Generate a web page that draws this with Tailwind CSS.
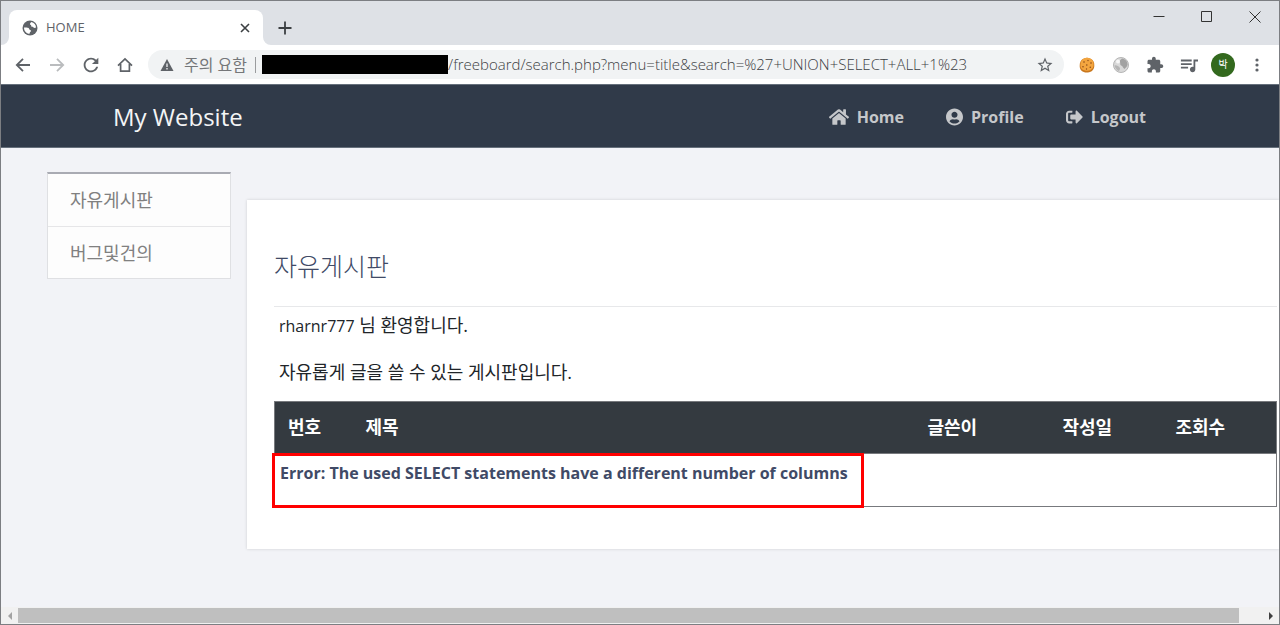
<!DOCTYPE html>
<html lang="ko">

<head>
  <meta charset="UTF-8">
  <meta name="viewport" content="width=device-width, initial-scale=1.0">
  <title>HOME</title>
  <script src="https://cdn.jsdelivr.net/npm/@tailwindcss/browser@4"></script>
</head>

<body class="font-['Open_Sans','Noto_Sans_CJK_KR',sans-serif]">
  <div class="flex flex-col h-screen border border-[#7c7e82] bg-white overflow-hidden">

    <!-- Tab strip -->
    <header class="flex items-end h-11 shrink-0 bg-[#dee1e6] pl-2">
      <div class="relative flex items-center w-[254px] h-[35px] rounded-t-lg bg-white pl-[13px] pr-2.5">
        <svg class="absolute -left-2 bottom-0 size-2" viewBox="0 0 8 8" fill="#fff"><path d="M8 0v8H0a8 8 0 0 0 8-8z"/></svg>
        <svg class="absolute -right-2 bottom-0 size-2" viewBox="0 0 8 8" fill="#fff"><path d="M0 0v8h8a8 8 0 0 1-8-8z"/></svg>
        <svg class="size-4 shrink-0" viewBox="0 0 16 16">
          <circle cx="8" cy="8" r="7.5" fill="#5f6368"/>
          <path d="M9.3 2.1c2.9.4 4.7 2.9 4.7 5.4-.9.7-1.900.6-2.5 0-.5-.6-1.5-.2-2.1-.9-.5-.6.1-1.3-.5-1.6-.7-.3-1.200-.8-.8-1.500.3-.6.700-.9 1.200-1.400z" fill="#fff"/>
          <path d="M2 7.6c1.700-.3 3.700-.2 4.500.5.900.7.500 1.500 1.500 1.800 1.200.3 1.300 1.100.5 1.800-.8.6-.7 1.500-1.300 2.200C4.200 13.700 2 11 2 7.600z" fill="#fff"/>
        </svg>
        <span class="ml-2 flex-1 text-[13px] text-[#5f6368]">HOME</span>
        <button class="flex items-center justify-center size-4" aria-label="Close tab">
          <svg class="size-4" viewBox="0 0 16 16" stroke="#3c4043" stroke-width="1.6"><path d="M4 4l8 8M12 4l-8 8"/></svg>
        </button>
      </div>
      <button class="flex items-center justify-center w-7 h-[35px] ml-2" aria-label="New tab">
        <svg class="size-4" viewBox="0 0 16 16" stroke="#3c4043" stroke-width="1.8"><path d="M8 1.500v13M1.500 8h13"/></svg>
      </button>
      <div class="flex ml-auto self-start">
        <button class="flex items-center justify-center w-12 h-8" aria-label="Minimize">
          <svg class="size-3" viewBox="0 0 12 12" stroke="#333"><path d="M.5 5.500h11"/></svg>
        </button>
        <button class="flex items-center justify-center w-12 h-8" aria-label="Maximize">
          <svg class="size-3" viewBox="0 0 12 12" fill="none" stroke="#333"><path d="M.5.5h10v10H.5z"/></svg>
        </button>
        <button class="flex items-center justify-center w-12 h-8" aria-label="Close">
          <svg class="size-3" viewBox="0 0 12 12" stroke="#333"><path d="M.5.5l11 11M11.500.5l-11 11"/></svg>
        </button>
      </div>
    </header>

    <!-- Toolbar -->
    <div class="flex items-center h-[39px] shrink-0 px-[5px] text-[#5f6368]">
      <button class="flex justify-center w-[34px]" aria-label="Back">
        <svg class="size-4" viewBox="0 0 16 16" fill="none" stroke="currentColor" stroke-width="1.8"><path d="M15 8H2M8 1.800L1.800 8 8 14.200"/></svg>
      </button>
      <button class="flex justify-center w-[34px] text-[#babcbe]" aria-label="Forward">
        <svg class="size-4" viewBox="0 0 16 16" fill="none" stroke="currentColor" stroke-width="1.800"><path d="M1 8h13M8 1.800L14.200 8 8 14.200"/></svg>
      </button>
      <button class="flex justify-center w-[34px]" aria-label="Reload">
        <svg class="size-[22px]" viewBox="0 0 24 24" fill="currentColor"><path d="M17.650 6.350C16.200 4.900 14.210 4 12 4c-4.420 0-7.990 3.580-7.990 8s3.570 8 7.990 8c3.730 0 6.840-2.550 7.730-6h-2.080c-.82 2.330-3.040 4-5.650 4-3.310 0-6-2.690-6-6s2.690-6 6-6c1.660 0 3.140.69 4.220 1.780L13 11h7V4l-2.350 2.350z"/></svg>
      </button>
      <button class="flex justify-center w-[34px]" aria-label="Home page">
        <svg class="size-4" viewBox="0 0 16 16" fill="none" stroke="currentColor" stroke-width="1.700"><path d="M1 8.600L8 2l7 6.600M3.600 7v7.200h8.800V7"/></svg>
      </button>

      <div class="flex flex-1 items-center h-[29px] mx-1.5 pl-3 pr-2.5 rounded-full bg-[#f1f3f4]">
        <svg class="size-3.5 shrink-0" viewBox="0 0 14 14"><path d="M7 1l6.500 12H.5z" fill="#5f6368"/><path d="M7 5.500v3.500M7 10v1.500" stroke="#f1f3f4" stroke-width="1.300"/></svg>
        <label for="url" class="ml-2.5 text-base whitespace-nowrap text-[#757779]">주의 요함</label>
        <span class="w-px h-4 ml-2 mr-1.5 bg-[#9a9c9e]"></span>
        <span class="w-[186px] h-[19px] bg-black"></span>
        <input id="url" type="text" value="/freeboard/search.php?menu=title&amp;search=%27+UNION+SELECT+ALL+1%23" class="flex-1 min-w-0 bg-transparent text-[15px] font-light text-[#3c4043] outline-none">
        <button aria-label="Bookmark">
          <svg class="size-[18px]" viewBox="0 0 24 24" fill="currentColor"><path d="M22 9.240l-7.190-.62L12 2 9.190 8.630 2 9.240l5.460 4.730L5.820 21 12 17.270 18.180 21l-1.630-7.030L22 9.240zM12 15.400l-3.760 2.270 1-4.280-3.320-2.880 4.380-.38L12 6.100l1.710 4.040 4.380.38-3.320 2.880 1 4.280L12 15.400z"/></svg>
        </button>
      </div>

      <button class="flex justify-center w-[34px]" aria-label="Cookie editor">
        <svg class="size-4" viewBox="0 0 16 16">
          <path d="M5 1.500c2-1.300 4.500-1 6.500.3 2.500 1 4 3.500 3.800 6.500.2 4-2.500 7-6.500 7.200C4 16 .500 13 .700 9 .500 5.500 2 2.500 5 1.500z" fill="#c9771d"/>
          <path d="M5.300 1.300c2-1 4.300-.8 6 .3 2.200 1 3.500 3.300 3.300 5.900.1 3.500-2.300 6-5.800 6.200-4.300.3-7.500-2-7.400-5.500.1-3.400 1.400-6 3.900-6.900z" fill="#f3a53f"/>
          <g fill="#8a4a18"><circle cx="5" cy="5" r=".8"/><circle cx="9" cy="3.500" r=".7"/><circle cx="12" cy="6" r=".8"/><circle cx="7.800" cy="8" r=".8"/><circle cx="4" cy="9.800" r=".8"/><circle cx="11.300" cy="10.300" r=".8"/><circle cx="7.500" cy="12" r=".7"/></g>
        </svg>
      </button>
      <button class="flex justify-center w-[34px]" aria-label="Proxy">
        <svg class="size-4" viewBox="0 0 16 16">
          <circle cx="8" cy="8" r="7.500" fill="#d9d9d9" stroke="#b5b5b5"/>
          <path d="M9 1.500c3.500.5 5.500 3 5.600 6-.5 2.500-2 3-3 4.500C9.500 11 10 9 8 8.500 6.500 7.500 8 6 6.500 4.500 7 3 8 2.500 9 1.500z" fill="#a2a2a2"/>
          <path d="M1.500 8.500c2-.5 4 .5 5.500 2.500 0 1.500-.5 2.500-1.500 3-2-1-3.500-3-4-5.500z" fill="#b5b5b5"/>
          <circle cx="5" cy="4.500" r="2" fill="#f7f7f7"/>
        </svg>
      </button>
      <button class="flex justify-center w-[34px]" aria-label="Extensions">
        <svg class="size-[18px]" viewBox="0 0 24 24" fill="currentColor"><path d="M20.500 11H19V7c0-1.100-.9-2-2-2h-4V3.500C13 2.120 11.880 1 10.500 1S8 2.120 8 3.500V5H4c-1.100 0-1.990.9-1.990 2v3.800H3.500c1.490 0 2.700 1.210 2.700 2.700s-1.210 2.700-2.700 2.700H2V20c0 1.100.9 2 2 2h3.800v-1.500c0-1.490 1.210-2.700 2.700-2.700 1.490 0 2.700 1.210 2.700 2.700V22H17c1.100 0 2-.9 2-2v-4h1.500c1.380 0 2.500-1.120 2.500-2.500S21.880 11 20.500 11z"/></svg>
      </button>
      <button class="flex justify-center w-[34px]" aria-label="Media">
        <svg class="size-[18px]" viewBox="2 2 20 20" fill="currentColor"><path d="M15 6H3v2h12V6zm0 4H3v2h12v-2zM3 16h8v-2H3v2zM17 6v8.180c-.31-.11-.65-.18-1-.18-1.660 0-3 1.340-3 3s1.340 3 3 3 3-1.340 3-3V8h3V6h-5z"/></svg>
      </button>
      <button class="flex justify-center w-[34px]" aria-label="Account">
        <span class="flex items-center justify-center size-6 rounded-full bg-[#33691e] text-white text-[10px]">박</span>
      </button>
      <button class="flex justify-center w-[34px]" aria-label="Menu">
        <svg class="size-4" viewBox="0 0 16 16" fill="currentColor"><circle cx="8" cy="3" r="1.600"/><circle cx="8" cy="8" r="1.600"/><circle cx="8" cy="13" r="1.600"/></svg>
      </button>
    </div>

    <!-- Navbar -->
    <nav class="flex items-center justify-between h-16 shrink-0 border-y border-[#66707c] bg-[#303a49] pt-0.5 pl-28 pr-[133px]">
      <a href="#" class="text-2xl text-[#f4f5f6]">My Website</a>
      <div class="flex gap-[42px] text-base font-bold text-[#c5c7ca]">
        <a href="#" class="flex items-center gap-2">
          <svg class="w-5 h-[18px]" viewBox="0 0 576 512" fill="currentColor"><path d="M280.370 148.260L96 300.110V464a16 16 0 0 0 16 16l112.060-.29a16 16 0 0 0 15.920-16V368a16 16 0 0 1 16-16h64a16 16 0 0 1 16 16v95.640a16 16 0 0 0 16 16.050L464 480a16 16 0 0 0 16-16V300L295.670 148.260a12.190 12.190 0 0 0-15.300 0zM571.600 251.470L488 182.560V44.050a12 12 0 0 0-12-12h-56a12 12 0 0 0-12 12v72.610L318.470 43a48 48 0 0 0-61 0L4.340 251.470a12 12 0 0 0-1.600 16.900l25.500 31A12 12 0 0 0 45.150 301l235.220-193.740a12.190 12.190 0 0 1 15.300 0L530.900 301a12 12 0 0 0 16.900-1.600l25.500-31a12 12 0 0 0-1.700-16.930z"/></svg>
          Home
        </a>
        <a href="#" class="flex items-center gap-2">
          <svg class="w-[17px] h-[18px]" viewBox="0 0 496 512" fill="currentColor"><path d="M248 8C111 8 0 119 0 256s111 248 248 248 248-111 248-248S385 8 248 8zm0 96c48.600 0 88 39.400 88 88s-39.400 88-88 88-88-39.400-88-88 39.400-88 88-88zm0 344c-58.700 0-111.300-26.600-146.500-68.200 18.800-35.400 55.600-59.800 98.500-59.800 2.400 0 4.800.4 7.100 1.100 13 4.200 26.600 6.900 40.900 6.900 14.300 0 28-2.700 40.900-6.900 2.300-.7 4.700-1.100 7.100-1.100 42.900 0 79.700 24.400 98.500 59.800C359.300 421.400 306.700 448 248 448z"/></svg>
          Profile
        </a>
        <a href="#" class="flex items-center gap-2">
          <svg class="w-[17px] h-[18px]" viewBox="0 0 512 512" fill="currentColor"><path d="M497 273L329 441c-15 15-41 4.500-41-17v-96H152c-13.300 0-24-10.700-24-24v-96c0-13.300 10.700-24 24-24h136V88c0-21.400 25.900-32 41-17l168 168c9.300 9.400 9.300 24.600 0 34zM192 436v-40c0-6.600-5.400-12-12-12H96c-17.700 0-32-14.300-32-32V160c0-17.700 14.300-32 32-32h84c6.600 0 12-5.400 12-12V76c0-6.600-5.400-12-12-12H96c-53 0-96 43-96 96v192c0 53 43 96 96 96h84c6.600 0 12-5.400 12-12z"/></svg>
          Logout
        </a>
      </div>
    </nav>

    <!-- Page -->
    <div class="flex flex-1 items-start min-h-0 gap-4 bg-[#f2f3f7] pt-6 pl-[46px]">
      <aside class="w-[184px] shrink-0 border border-[#dfe0e3] border-t-2 border-t-[#a9abb3] bg-[#fdfdfd] text-lg text-[#808080]">
        <a href="#" class="flex items-center h-[53px] pl-[22px] border-b border-[#e6e6e8]">자유게시판</a>
        <a href="#" class="flex items-center h-[51px] pl-[22px]">버그및건의</a>
      </aside>

      <main class="flex-1 mt-7 pt-[46px] pb-[42px] pl-[27px] pr-0.5 bg-white shadow-[0_0_3px_rgba(0,0,0,0.15)]">
        <h1 class="h-[61px] border-b border-[#e7e8ea] text-[25px] leading-10 font-light text-[#404a66]">자유게시판</h1>
        <p class="pl-[5px] mt-1.5 text-lg leading-6 text-[#212529]"><span class="text-base">rharnr777</span> 님 환영합니다.</p>
        <p class="pl-[5px] mt-[22px] text-lg leading-6 text-[#212529]">자유롭게 글을 쓸 수 있는 게시판입니다.</p>
        <div class="relative mt-[17px]">
          <table class="w-full table-fixed border border-[#77797d]">
            <thead class="bg-[#343a40] text-left text-lg text-white">
              <tr class="h-[52px] border-b border-[#77797d]">
                <th class="w-[78px] pl-[13px] pb-0.5">번호</th>
                <th class="pl-[13px] pb-0.5">제목</th>
                <th class="w-[135px] pl-[13px] pb-0.5">글쓴이</th>
                <th class="w-[113px] pl-[13px] pb-0.5">작성일</th>
                <th class="w-[114px] pl-[13px] pb-0.5">조회수</th>
              </tr>
            </thead>
            <tbody>
              <tr class="h-[53px]">
                <td colspan="5" class="align-top pl-[5px] pt-[7px] text-base font-bold text-[#404a66]">Error: The used SELECT statements have a different number of columns</td>
              </tr>
            </tbody>
          </table>
          <!-- Highlight around the SQL error -->
          <div class="absolute -left-0.5 top-[52px] w-[59%] h-[55px] border-3 border-[#ff0000]"></div>
        </div>
      </main>
    </div>

    <!-- Horizontal scrollbar -->
    <div class="flex items-center h-[17px] shrink-0 bg-[#f1f1f1]">
      <button class="flex justify-center w-[17px]" aria-label="Scroll left">
        <svg class="size-2" viewBox="0 0 8 8" fill="#a3a3a3"><path d="M6 0v8L2 4z"/></svg>
      </button>
      <div class="flex-1 pr-[23px]"><div class="h-[15px] bg-[#bfbfbf]"></div></div>
      <button class="flex justify-center w-[17px]" aria-label="Scroll right">
        <svg class="size-2" viewBox="0 0 8 8" fill="#404040"><path d="M2 0v8l4-4z"/></svg>
      </button>
    </div>
  </div>
</body>

</html>
